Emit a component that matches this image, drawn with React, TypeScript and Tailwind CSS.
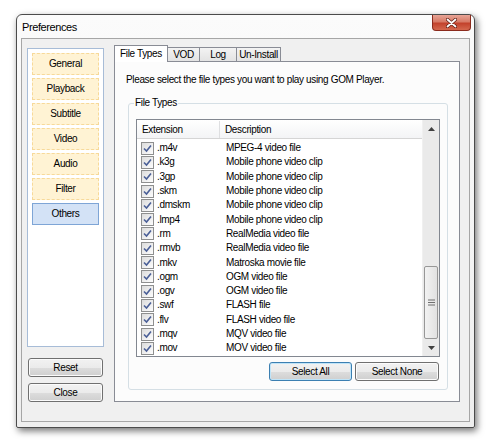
import React from "react";

const sideItems = ["General", "Playback", "Subtitle", "Video", "Audio", "Filter", "Others"];

const fileTypes: [string, string][] = [
	[".m4v", "MPEG-4 video file"],
	[".k3g", "Mobile phone video clip"],
	[".3gp", "Mobile phone video clip"],
	[".skm", "Mobile phone video clip"],
	[".dmskm", "Mobile phone video clip"],
	[".lmp4", "Mobile phone video clip"],
	[".rm", "RealMedia video file"],
	[".rmvb", "RealMedia video file"],
	[".mkv", "Matroska movie file"],
	[".ogm", "OGM video file"],
	[".ogv", "OGM video file"],
	[".swf", "FLASH file"],
	[".flv", "FLASH video file"],
	[".mqv", "MQV video file"],
	[".mov", "MOV video file"],
];

// Win7 style push button
const PushButton: React.FC<{ label: string; className?: string; focused?: boolean }> = ({ label, className, focused }) => (
	<div
		className={`flex items-center justify-center rounded-[3px] border ${
			focused ? "border-[#3c7fb1] shadow-[inset_0_0_0_1px_#bfe4f8]" : "border-[#707070] shadow-[inset_0_0_0_1px_#fbfbfb]"
		} bg-[linear-gradient(#f2f2f2_0%,#ebebeb_50%,#dddddd_51%,#cfcfcf_100%)] ${className ?? ""}`}
	>
		{label}
	</div>
);

const CheckBox: React.FC = () => (
	<div className="w-[13px] h-[13px] border border-[#8e8f8f] bg-[linear-gradient(135deg,#dcdcdc,#fdfdfd)] flex items-center justify-center">
		<svg width="9" height="9" viewBox="0 0 9 9">
			<path d="M1 4.5 L3.5 7 L8 1.5" fill="none" stroke="#4a5f97" strokeWidth="1.6" />
		</svg>
	</div>
);

const App: React.FC = () => {
	return (
		<div
			className="w-[490px] h-[444px] bg-white pt-[14px] pl-[16px] text-[10px] tracking-[-0.35px] text-black leading-none"
			style={{ fontFamily: '"Liberation Sans", Arial, sans-serif' }}
		>
			{/* Window */}
			<div className="w-[459px] h-[414px] border border-[#4b4b4b] rounded-t-[6px] rounded-b-[2px] bg-[linear-gradient(#fbfbfb,#eeeeee)] shadow-[2px_3px_7px_rgba(0,0,0,0.55)] flex flex-col">
				{/* Title bar */}
				<div className="h-[23px] flex items-start justify-between">
					<div className="pl-[5px] pt-[7px] text-[11px] tracking-[-0.4px]">Preferences</div>
					<div className="mr-[3px] w-[39px] h-[16px] rounded-b-[4px] border border-t-0 border-[#8b2a1c] bg-[linear-gradient(#e7a496_0%,#d77a66_45%,#c2422c_55%,#d4684e_100%)] flex items-center justify-center">
						<svg width="11" height="10" viewBox="0 0 11 10">
							<path d="M1.5 1.5 L9.5 8.5 M9.5 1.5 L1.5 8.5" stroke="#5a1a10" strokeWidth="3.2" strokeLinecap="round" />
							<path d="M1.5 1.5 L9.5 8.5 M9.5 1.5 L1.5 8.5" stroke="#ffffff" strokeWidth="1.8" strokeLinecap="round" />
						</svg>
					</div>
				</div>

				{/* Client area */}
				<div className="mx-[4px] h-[384px] border border-[#a6a6a6] bg-[#f0f0f0] flex">
					{/* Left column */}
					<div className="ml-[5px] mt-[9px] w-[77px] flex flex-col">
						<div className="h-[299px] border border-[#a7bcd7] bg-white p-[4px] flex flex-col gap-[3px]">
							{sideItems.map((item) => (
								<div
									key={item}
									className={`h-[22px] flex items-center justify-center border ${
										item === "Others" ? "bg-[#d3e2f6] border-[#7ea5d6]" : "bg-[#fff3d4] border-dashed border-[#f7d999]"
									}`}
								>
									{item}
								</div>
							))}
						</div>
						<PushButton label="Reset" className="mt-[11px] ml-[1px] w-[75px] h-[19px]" />
						<PushButton label="Close" className="mt-[6px] ml-[1px] w-[75px] h-[19px]" />
					</div>

					{/* Tab control */}
					<div className="ml-[10px] mt-[6px] w-[346px] flex flex-col">
						<div className="h-[16px] flex items-end">
							<div className="relative z-10 -mb-px h-[17px] w-[54px] border border-b-0 border-[#898c95] bg-white flex items-center justify-center">
								File Types
							</div>
							<div className="-ml-px h-[14px] w-[33px] border border-b-0 border-[#898c95] bg-[linear-gradient(#f3f3f3,#e3e3e3)] flex items-center justify-center pt-[1px]">
								VOD
							</div>
							<div className="-ml-px h-[14px] w-[38px] border border-b-0 border-[#898c95] bg-[linear-gradient(#f3f3f3,#e3e3e3)] flex items-center justify-center pt-[1px]">
								Log
							</div>
							<div className="-ml-px h-[14px] w-[45px] border border-b-0 border-[#898c95] bg-[linear-gradient(#f3f3f3,#e3e3e3)] flex items-center justify-center pt-[1px]">
								Un-Install
							</div>
						</div>

						<div className="h-[341px] border border-[#898c95] bg-[#fcfcfc] flex flex-col">
							<div className="pl-[11px] pt-[13px] h-[30px]">
								Please select the file types you want to play using GOM Player.
							</div>

							{/* Group box */}
							<div className="relative ml-[13px] mt-[11px] w-[320px] h-[287px] border border-[#d5dfe5] rounded-[3px] flex flex-col">
								<span className="absolute -top-[6px] left-[5px] px-[1px] bg-[#fcfcfc]">File Types</span>

								{/* List view */}
								<div className="ml-[7px] mt-[15px] w-[304px] h-[238px] border border-[#828790] bg-white flex">
									<div className="flex-1 flex flex-col overflow-hidden">
										<div className="h-[19px] pt-[1px] flex border-b border-[#d5d5d5] bg-[linear-gradient(#ffffff,#f3f4f6)]">
											<div className="w-[83px] pl-[5px] flex items-center border-r border-[#dedfe1]">Extension</div>
											<div className="pl-[5px] flex items-center">Description</div>
										</div>
										<div className="pt-[2px] flex flex-col">
											{fileTypes.map(([ext, desc]) => (
												<div key={ext} className="h-[14.3px] flex items-center">
													<div className="w-[83px] pl-[4px] flex items-center">
														<CheckBox />
														<span className="ml-[3px]">{ext}</span>
													</div>
													<div className="pl-[6px]">{desc}</div>
												</div>
											))}
										</div>
									</div>

									{/* Scrollbar */}
									<div className="w-[17px] h-full bg-[#eaeaea] border-l border-[#f0f0f0] flex flex-col">
										<div className="h-[17px] flex items-center justify-center">
											<svg width="7" height="4" viewBox="0 0 7 4">
												<path d="M0 4 L3.5 0 L7 4 Z" fill="#404040" />
											</svg>
										</div>
										<div className="flex-1" />
										<div className="mx-[1px] h-[73px] rounded-[2px] border border-[#979797] bg-[linear-gradient(90deg,#f2f2f2,#e1e1e1)] flex items-center justify-center">
											<svg width="7" height="7" viewBox="0 0 7 7">
												<path d="M0 1 H7 M0 3.5 H7 M0 6 H7" stroke="#6f6f6f" strokeWidth="1" />
											</svg>
										</div>
										<div className="h-[17px] flex items-center justify-center">
											<svg width="7" height="4" viewBox="0 0 7 4">
												<path d="M0 0 L3.5 4 L7 0 Z" fill="#404040" />
											</svg>
										</div>
									</div>
								</div>

								<div className="mt-[5px] mr-[8px] flex justify-end gap-[3px]">
									<PushButton label="Select All" focused className="w-[83px] h-[19px]" />
									<PushButton label="Select None" className="w-[84px] h-[19px]" />
								</div>
							</div>
						</div>
					</div>
				</div>
			</div>
		</div>
	);
};

export default App;
